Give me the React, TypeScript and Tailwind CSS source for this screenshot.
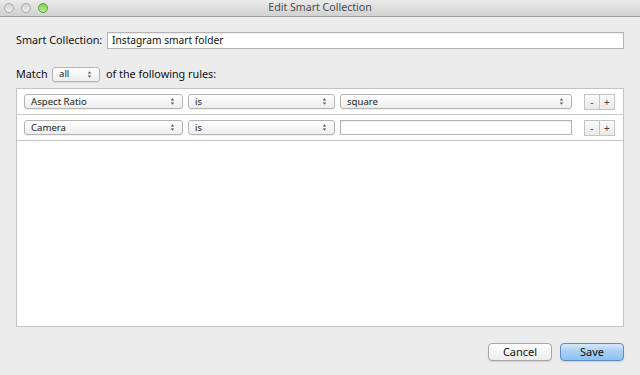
const font = { fontFamily: '"Lucida Grande", "Noto Sans", "DejaVu Sans", sans-serif' }

const Select = ({ label, className }: { label: string; className: string }) => (
  <div
    className={`flex h-[15px] items-center justify-between rounded-[3px] border border-[#b4b4b4] bg-gradient-to-b from-white to-[#ededed] pl-[6px] pr-[7px] text-[9.6px] leading-none text-[#222] shadow-[0_1px_0_rgba(0,0,0,0.06)] ${className}`}
  >
    <span>{label}</span>
    <svg width="5" height="9" viewBox="0 0 5 9">
      <path d="M0.8 3.6 L2.5 1.2 L4.2 3.6 Z M0.8 5.4 L2.5 7.8 L4.2 5.4 Z" fill="#555" />
    </svg>
  </div>
)

const PlusMinus = () => (
  <div className="ml-auto mr-[8px] flex h-[16px] w-[31px] border border-[#c4c4c4] bg-gradient-to-b from-[#fbfbfb] to-[#e9e9e9] text-[10px] leading-none text-[#444]">
    <div className="flex w-1/2 items-center justify-center border-r border-[#c4c4c4]">-</div>
    <div className="flex w-1/2 items-center justify-center">+</div>
  </div>
)

const RuleRow = ({ field, op, value }: { field: string; op: string; value?: string }) => (
  <div className="flex h-[26px] items-center border-b border-[#c8c8c8] pl-[7px]">
    <Select label={field} className="w-[159px]" />
    <Select label={op} className="ml-[5px] w-[147px]" />
    {value ? (
      <Select label={value} className="ml-[5px] w-[232px]" />
    ) : (
      <div className="ml-[5px] h-[15px] w-[232px] border border-[#b4b4b4] bg-white shadow-[inset_0_1px_1px_rgba(0,0,0,0.08)]" />
    )}
    <PlusMinus />
  </div>
)

const App = () => {
  return (
    <div className="flex h-[375px] w-[640px] flex-col bg-[#ececec] text-[10.8px] text-[#111]" style={font}>
      <div className="relative flex h-[17px] items-center justify-center border-b border-[#9d9d9d] bg-gradient-to-b from-[#ebebeb] to-[#d1d1d1]">
        <div className="absolute left-[4px] top-[3px] flex gap-[7px]">
          <div className="h-[10px] w-[10px] rounded-full border border-[#a9a9a9] bg-gradient-to-b from-[#d2d2d2] to-[#f0f0f0]" />
          <div className="h-[10px] w-[10px] rounded-full border border-[#a9a9a9] bg-gradient-to-b from-[#d2d2d2] to-[#f0f0f0]" />
          <div className="h-[10px] w-[10px] rounded-full border border-[#5d9c3a] bg-gradient-to-b from-[#7fcf52] to-[#bdf08e]" />
        </div>
        <span className="text-[10.6px] text-[#4a4a4a]">Edit Smart Collection</span>
      </div>

      <div className="flex flex-1 flex-col px-[16px]">
        <div className="mt-[15px] flex items-center">
          <span className="w-[91px] whitespace-nowrap">Smart Collection:</span>
          <div className="flex h-[17px] flex-1 items-center border border-[#b4b4b4] bg-white pl-[4px] text-[10.2px] shadow-[inset_0_1px_1px_rgba(0,0,0,0.08)]">
            Instagram smart folder
          </div>
        </div>

        <div className="mt-[17px] flex items-center">
          <span className="w-[36px]">Match</span>
          <Select label="all" className="w-[48px]" />
          <span className="ml-[6px]">of the following rules:</span>
        </div>

        <div className="mt-[6px] flex h-[239px] flex-col border border-[#c4c4c4] bg-white">
          <RuleRow field="Aspect Ratio" op="is" value="square" />
          <RuleRow field="Camera" op="is" />
        </div>

        <div className="mt-[16px] flex justify-end gap-[8px] text-[11px]">
          <div className="flex h-[18px] w-[64px] items-center justify-center rounded-[4px] border border-[#a6a6a6] bg-gradient-to-b from-white to-[#ececec] shadow-[0_1px_1px_rgba(0,0,0,0.12)]">
            Cancel
          </div>
          <div className="flex h-[18px] w-[64px] items-center justify-center rounded-[4px] border border-[#5b8cc4] bg-gradient-to-b from-[#d6e8fa] via-[#a7cdf3] to-[#8ec0f0] shadow-[0_1px_1px_rgba(0,0,0,0.12)]">
            Save
          </div>
        </div>
      </div>
    </div>
  )
}

export default App
